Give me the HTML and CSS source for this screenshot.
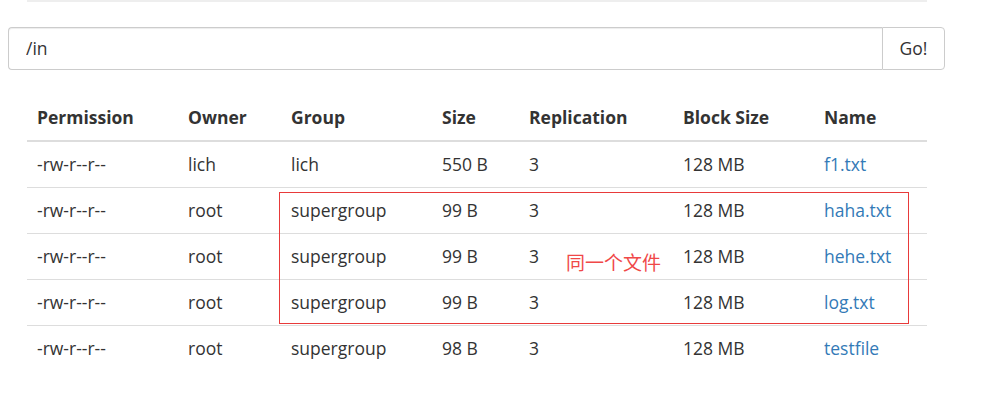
FILE: index.html
```html
<!DOCTYPE html>
<html lang="en">
<head>
  <meta charset="UTF-8">
  <meta name="viewport" content="width=device-width, initial-scale=1.0">
  <title>Browse Directory</title>
  <link rel="stylesheet" href="styles.css">
</head>
<body>
  <div id="page">
    <hr class="topRule">

    <!-- Path input with Go button -->
    <form class="pathForm">
      <input type="text" class="pathInput" value="/in">
      <button type="submit" class="goBtn">Go!</button>
    </form>

    <!-- Directory listing -->
    <div class="listing">
      <table class="fileTable">
        <colgroup>
          <col style="width:151px">
          <col style="width:103px">
          <col style="width:151px">
          <col style="width:87px">
          <col style="width:154px">
          <col style="width:141px">
          <col>
        </colgroup>
        <thead>
          <tr>
            <th>Permission</th>
            <th>Owner</th>
            <th>Group</th>
            <th>Size</th>
            <th>Replication</th>
            <th>Block Size</th>
            <th>Name</th>
          </tr>
        </thead>
        <tbody>
          <tr>
            <td>-rw-r--r--</td><td>lich</td><td>lich</td><td>550 B</td><td>3</td><td>128 MB</td>
            <td><a href="#">f1.txt</a></td>
          </tr>
          <tr>
            <td>-rw-r--r--</td><td>root</td><td>supergroup</td><td>99 B</td><td>3</td><td>128 MB</td>
            <td><a href="#">haha.txt</a></td>
          </tr>
          <tr>
            <td>-rw-r--r--</td><td>root</td><td>supergroup</td><td>99 B</td><td>3</td><td>128 MB</td>
            <td><a href="#">hehe.txt</a></td>
          </tr>
          <tr>
            <td>-rw-r--r--</td><td>root</td><td>supergroup</td><td>99 B</td><td>3</td><td>128 MB</td>
            <td><a href="#">log.txt</a></td>
          </tr>
          <tr>
            <td>-rw-r--r--</td><td>root</td><td>supergroup</td><td>98 B</td><td>3</td><td>128 MB</td>
            <td><a href="#">testfile</a></td>
          </tr>
        </tbody>
      </table>

      <!-- Annotation drawn over the table -->
      <div class="markBox"></div>
      <div class="markNote">同一个文件</div>
    </div>
  </div>
</body>
</html>
```

FILE: styles.css
```css
html, body {
  margin: 0;
  padding: 0;
  background: #fff;
}
body {
  font-family: "Open Sans", "Noto Sans CJK SC", sans-serif;
  font-size: 17.5px;
  line-height: 25px;
  color: #333;
}

#page {
  width: 1000px;
}

.topRule {
  margin: 0 73px 0 27px;
  border: 0;
  border-top: 2px solid #eee;
  height: 0;
}

/* Path form: input + button joined */
.pathForm {
  display: flex;
  margin: 25px 55px 0 8px;
  height: 43px;
}
.pathInput {
  flex: 1;
  font: inherit;
  color: #333;
  padding: 0 15px 0 17px;
  border: 1px solid #ccc;
  border-right: 0;
  border-radius: 4px 0 0 4px;
  box-shadow: inset 0 1px 1px rgba(0,0,0,0.075);
  outline: none;
}
.goBtn {
  font: inherit;
  color: #333;
  background: #fff;
  border: 1px solid #ccc;
  border-radius: 0 4px 4px 0;
  padding: 0 15px;
  width: 63px;
}

/* Listing table */
.listing {
  position: relative;
  margin: 24px 73px 0 27px;
}
.fileTable {
  width: 900px;
  border-collapse: collapse;
  table-layout: fixed;
}
.fileTable th,
.fileTable td {
  text-align: left;
  padding: 10px;
  white-space: nowrap;
}
.fileTable th {
  font-weight: 700;
  border-bottom: 2px solid #ddd;
  padding-top: 11px;
}
.fileTable td {
  border-top: 1px solid #ddd;
}
.fileTable tbody tr:first-child td {
  border-top: 0;
}
.fileTable a {
  color: #337ab7;
  text-decoration: none;
}

/* red annotation */
.markBox {
  position: absolute;
  left: 252px;
  top: 98px;
  width: 628px;
  height: 130px;
  border: 1px solid #e83a3a;
}
.markNote {
  position: absolute;
  left: 539px;
  top: 155px;
  color: #f04848;
  font-size: 19px;
  font-family: "Noto Sans CJK SC", sans-serif;
  font-weight: 400;
}
```
